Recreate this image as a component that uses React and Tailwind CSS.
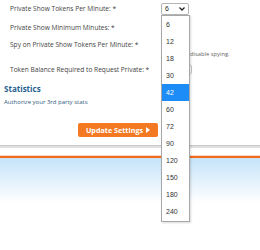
export default function App() {
  const opts = ["6", "12", "18", "30", "42", "60", "72", "90", "120", "150", "180", "240"];
  return (
    <div className="relative w-[260px] h-[250px] bg-white overflow-hidden font-['Open_Sans',sans-serif] text-[#444]">
      <div className="pt-[3px]">
        <div className="flex items-center h-[12px]">
          <div className="w-[161px] pl-[10px] text-[6.6px] leading-[8px]">Private Show Tokens Per Minute: *</div>
          <div className="w-[28px] h-[12px] border border-[#b5b5b5] rounded-[2px] flex items-center justify-between pl-[3px] pr-[3px] font-['Liberation_Sans',sans-serif] text-[7px] text-[#222]">
            <span>6</span>
            <svg width="6" height="4" viewBox="0 0 6 4"><path d="M0.5 0.5 L3 3 L5.5 0.5" stroke="#222" strokeWidth="1.3" fill="none" /></svg>
          </div>
        </div>
        <div className="flex items-center h-[12px] mt-[7px]">
          <div className="w-[161px] pl-[10px] text-[6.6px] leading-[8px]">Private Show Minimum Minutes: *</div>
        </div>
        <div className="flex items-center h-[12px] mt-[5px]">
          <div className="w-[161px] pl-[10px] text-[6.6px] leading-[8px]">Spy on Private Show Tokens Per Minute: *</div>
        </div>
        <div className="pl-[161px] h-[7px] text-[5.8px] leading-[7px] text-[#666]">Set to 0 to disable spying.</div>
        <div className="flex items-center h-[11px] mt-[6px]">
          <div className="w-[161px] pl-[10px] text-[6.6px] leading-[8px]">Token Balance Required to Request Private: *</div>
          <div className="w-[31px] h-[11px] border border-[#c4c4c4] rounded-[3px]"></div>
        </div>
        <div className="pl-[4px] mt-[8px] h-[12px] text-[8px] leading-[12px] font-bold text-[#1f5f8f]">Statistics</div>
        <div className="pl-[4px] mt-[3px] h-[9px] text-[6px] leading-[9px] text-[#2f5a7e]">Authorize your 3rd party stats</div>
        <div className="mt-[16px] ml-[78px] w-[80px] h-[14px] rounded-[2px] bg-[#f37a22] flex items-center justify-center gap-[3px] text-white font-bold text-[7.2px]">
          <span>Update Settings</span>
          <svg width="4" height="6" viewBox="0 0 4 6"><path d="M0 0 L4 3 L0 6 Z" fill="#fff" /></svg>
        </div>
        <div className="mt-[8px] h-[1px] bg-[#c9c9c9]"></div>
        <div className="h-[2px] bg-[#e0e0e0]"></div>
        <div className="mt-[7px] h-[1px] bg-[#fbd9c4]"></div>
        <div className="h-[2px] bg-[#f26b1d]"></div>
        <div className="h-[45px] bg-gradient-to-b from-[#c5e3f8] to-white"></div>
      </div>
      <div className="absolute left-[161px] top-[15px] w-[29px] border border-[#a7a7a7] bg-white pb-[1px] shadow-[1px_1px_2px_rgba(0,0,0,0.15)] font-['Liberation_Sans',sans-serif] text-[7px] text-[#333]">
        {opts.map((o) => (
          <div key={o} className={"h-[17px] leading-[17px] pl-[4px] " + (o === "42" ? "bg-[#1e8cf7] text-white" : "")}>{o}</div>
        ))}
      </div>
    </div>
  );
}
